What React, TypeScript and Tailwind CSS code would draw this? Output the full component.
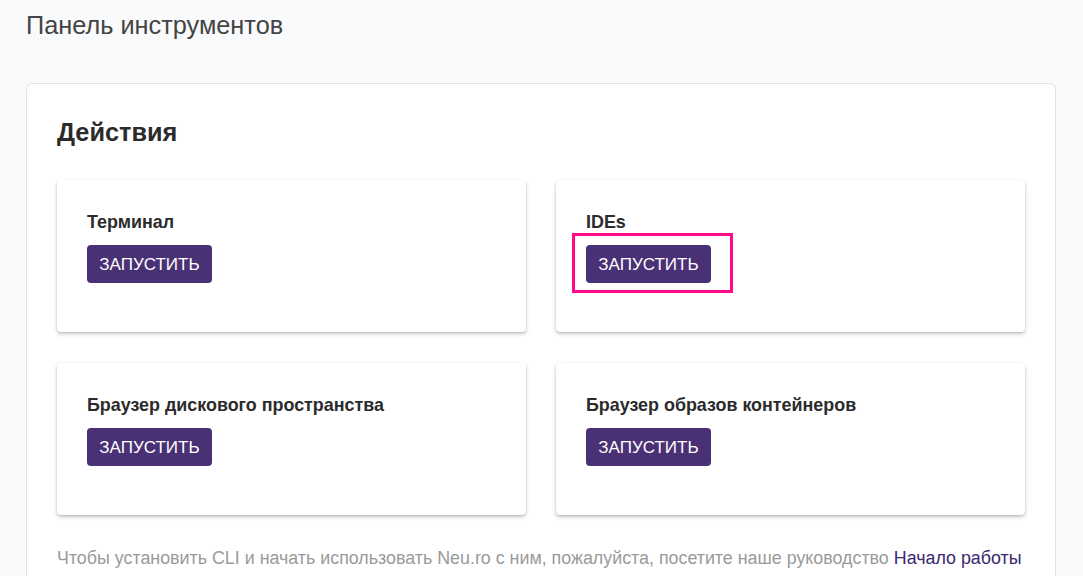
import type { ReactNode } from "react";

const font = { fontFamily: '"Liberation Sans", Arial, sans-serif' };

function LaunchButton({ highlighted }: { highlighted?: boolean }) {
  const button = (
    <button
      type="button"
      className="h-[38px] w-[125px] rounded-[4px] bg-[#4a3074] text-[17px] uppercase leading-none text-white"
    >
      Запустить
    </button>
  );

  if (!highlighted) return button;

  return (
    <div className="-mb-[10px] -ml-[14px] -mt-[12px] w-fit border-[3px] border-[#ff0a8a] pb-[7px] pl-[11px] pr-[19px] pt-[9px]">
      {button}
    </div>
  );
}

function ActionCard({ title, children }: { title: string; children: ReactNode }) {
  return (
    <div className="h-[152px] rounded-[4px] bg-white pl-[30px] pt-[32px] shadow-[0_2px_4px_rgba(0,0,0,0.2),0_1px_2px_rgba(0,0,0,0.12)]">
      <h3 className="mb-[12px] text-[17.9px] font-bold leading-[21px] text-[#2b2b2b]">{title}</h3>
      {children}
    </div>
  );
}

export default function App() {
  return (
    <div className="h-[576px] overflow-hidden bg-[#f9fafc] px-[26px] pt-[10px]" style={font}>
      <h1 className="text-[25.3px] leading-[30px] text-[#444]">Панель инструментов</h1>

      <div className="mt-[43px] w-[1030px] rounded-[6px] border border-[#e2e3e6] bg-white px-[30px] pt-[33px]">
        <h2 className="text-[25.3px] font-bold leading-[30px] text-[#2b2b2b]">Действия</h2>

        <div className="mt-[33px] grid grid-cols-2 gap-x-[30px] gap-y-[31px]">
          <ActionCard title="Терминал">
            <LaunchButton />
          </ActionCard>
          <ActionCard title="IDEs">
            <LaunchButton highlighted />
          </ActionCard>
          <ActionCard title="Браузер дискового пространства">
            <LaunchButton />
          </ActionCard>
          <ActionCard title="Браузер образов контейнеров">
            <LaunchButton />
          </ActionCard>
        </div>

        <p className="mt-[32px] pb-[30px] text-[17.85px] leading-[22px] text-[#9a9a9a]">
          Чтобы установить CLI и начать использовать Neu.ro с ним, пожалуйста, посетите наше руководство{" "}
          <a className="text-[#3b2870]">Начало работы</a>
        </p>
      </div>
    </div>
  );
}
